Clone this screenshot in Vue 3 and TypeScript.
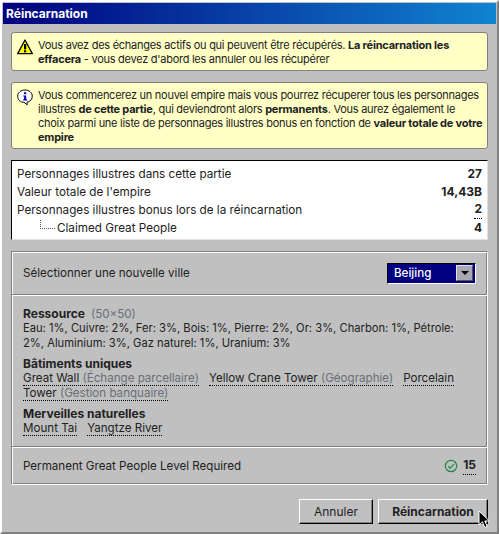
<template>
  <div class="window">
    <div class="title">Réincarnation</div>
    <div class="content">
      <div class="notice">
        <svg class="notice-icon" width="16" height="16" viewBox="0 0 16 16">
          <path d="M8 1 L15.3 14.6 H0.7 Z" fill="#ffff00" stroke="#000" stroke-width="1.3" stroke-linejoin="round" />
          <rect x="7" y="5" width="2.2" height="5.4" fill="#000" />
          <rect x="7" y="11.3" width="2.2" height="2" fill="#000" />
        </svg>
        <p>Vous avez des échanges actifs ou qui peuvent être récupérés. <b>La réincarnation les effacera</b> - vous devez d'abord les annuler ou les récupérer</p>
      </div>
      <div class="notice tall">
        <svg class="notice-icon" width="16" height="17" viewBox="0 0 16 17">
          <path d="M8 1 C12 1 15.3 3.6 15.3 7.2 C15.3 10.8 12.4 13 10 13.2 L10.2 15.8 L7 13.3 C3.4 13.2 0.7 10.8 0.7 7.2 C0.7 3.6 4 1 8 1 Z" fill="#fff" stroke="#000" stroke-width="1" />
          <rect x="7" y="3.2" width="2.2" height="2" fill="#0000c0" />
          <path d="M6.2 6.4 H9.2 V10.2 H10.2 V11.4 H6.2 V10.2 H7.1 V7.6 H6.2 Z" fill="#0000c0" />
        </svg>
        <p>Vous commencerez un nouvel empire mais vous pourrez récuperer tous les personnages illustres <b>de cette partie</b>, qui deviendront alors <b>permanents</b>. Vous aurez également le choix parmi une liste de personnages illustres bonus en fonction de <b>valeur totale de votre empire</b></p>
      </div>

      <div class="stats">
        <div v-for="row in stats" :key="row.label" class="stat-row" :class="{ child: row.child }">
          <span class="stat-label">{{ row.label }}</span>
          <b :class="{ dotted: row.dotted }">{{ row.value }}</b>
        </div>
      </div>

      <div class="panel">
        <div class="section city-row">
          <span>Sélectionner une nouvelle ville</span>
          <div class="select">
            <span class="select-value">Beijing</span>
            <span class="select-btn"><i class="arrow"></i></span>
          </div>
        </div>
        <div class="section details">
          <div class="group">
            <div class="heading"><b>Ressource</b><span class="muted size">(50×50)</span></div>
            <div>Eau: 1%, Cuivre: 2%, Fer: 3%, Bois: 1%, Pierre: 2%, Or: 3%, Charbon: 1%, Pétrole: 2%, Aluminium: 3%, Gaz naturel: 1%, Uranium: 3%</div>
          </div>
          <div class="group">
            <div class="heading"><b>Bâtiments uniques</b></div>
            <div class="links">
              <span class="link">Great Wall <span class="muted">(Échange parcellaire)</span></span>
              <span class="link">Yellow Crane Tower <span class="muted">(Géographie)</span></span>
              <span class="link">Porcelain Tower <span class="muted">(Gestion banquaire)</span></span>
            </div>
          </div>
          <div class="group">
            <div class="heading"><b>Merveilles naturelles</b></div>
            <div class="links">
              <span class="link">Mount Tai</span>
              <span class="link">Yangtze River</span>
            </div>
          </div>
        </div>
        <div class="section req-row">
          <span>Permanent Great People Level Required</span>
          <span class="req-value">
            <svg width="14" height="14" viewBox="0 0 14 14">
              <circle cx="7" cy="7" r="5.7" fill="none" stroke="#1f8a4c" stroke-width="1.2" />
              <path d="M4.2 7.2 L6.3 9.2 L10 5.2" fill="none" stroke="#1f8a4c" stroke-width="1.2" />
            </svg>
            <b class="dotted">15</b>
          </span>
        </div>
      </div>
    </div>
    <div class="footer">
      <button class="btn annuler">Annuler</button>
      <button class="btn primary">Réincarnation</button>
    </div>
    <svg class="cursor" width="13" height="19" viewBox="0 0 13 19">
      <path d="M1 1 V15 L4.4 11.8 L6.8 17.5 L9.2 16.4 L6.8 11 H11.4 Z" fill="#000" stroke="#fff" stroke-width="1" />
    </svg>
  </div>
</template>

<script setup lang="ts">
interface StatRow {
  label: string;
  value: string;
  dotted?: boolean;
  child?: boolean;
}

const stats: StatRow[] = [
  { label: 'Personnages illustres dans cette partie', value: '27' },
  { label: "Valeur totale de l'empire", value: '14,43B' },
  { label: 'Personnages illustres bonus lors de la réincarnation', value: '2', dotted: true },
  { label: 'Claimed Great People', value: '4', child: true },
];
</script>

<style>
html,
body {
  margin: 0;
  background: #c0c0c0;
}
</style>

<style scoped>
.window {
  position: relative;
  width: 499px;
  height: 534px;
  box-sizing: border-box;
  padding: 1px 1px 0;
  display: flex;
  flex-direction: column;
  background: #c0c0c0;
  border-top: 2px solid #fff;
  border-left: 2px solid #fff;
  border-right: 2px solid #808080;
  border-bottom: 2px solid #808080;
  font-family: Inter, 'Liberation Sans', sans-serif;
  font-size: 11.6px;
  line-height: 15px;
  color: #222;
}

b {
  font-size: 12px;
}

.title {
  height: 21px;
  padding-left: 3px;
  flex: none;
  display: flex;
  align-items: center;
  background: linear-gradient(to right, #000080, #1084d0);
  color: #fff;
  font-weight: 700;
  font-size: 12px;
}

.content {
  padding: 8px 8px 0;
  display: flex;
  flex-direction: column;
  gap: 11px;
}

.notice {
  display: flex;
  gap: 5px;
  height: 39px;
  box-sizing: border-box;
  padding: 5px 3px 5px 5px;
  background: #ffffc6;
  border: 1px solid #808080;
  border-radius: 3px;
  font-size: 11px;
  letter-spacing: -0.27px;
}

.notice.tall {
  height: 67px;
}

.notice b {
  font-size: 11px;
  letter-spacing: -0.22px;
}

.notice p {
  margin: 0;
  line-height: 14px;
}

.notice-icon {
  flex: none;
  margin-top: 1px;
}

.stats {
  height: 80px;
  box-sizing: border-box;
  padding: 4px 5px 2px;
  background: #fff;
  border-top: 1px solid #000;
  border-left: 1px solid #000;
  border-right: 1px solid #dfdfdf;
  border-bottom: 1px solid #dfdfdf;
  font-size: 11.7px;
  line-height: 18px;
}

.stat-row {
  display: flex;
  justify-content: space-between;
}

.stat-row.child .stat-label {
  position: relative;
  margin-left: 40px;
}

.stat-row.child .stat-label::before {
  content: '';
  position: absolute;
  left: -17px;
  top: 1px;
  width: 14px;
  height: 8px;
  border-left: 1px dotted #555;
  border-bottom: 1px dotted #555;
}

.dotted {
  border-bottom: 1px dotted #000;
  line-height: 15px;
  height: 17px;
}

.panel {
  border-top: 1px solid #808080;
  border-left: 1px solid #808080;
  border-right: 1px solid #fff;
  border-bottom: 1px solid #fff;
  box-shadow: inset 1px 1px 0 #fff, inset -1px -1px 0 #808080;
}

.section {
  padding: 0 11px;
}

.section + .section {
  border-top: 1px solid #808080;
  box-shadow: inset 0 1px 0 #fff;
}

.city-row {
  height: 42px;
  display: flex;
  align-items: center;
  justify-content: space-between;
}

.select {
  display: flex;
  align-items: center;
  width: 89px;
  height: 21px;
  box-sizing: border-box;
  padding: 1px 2px;
  background: #000080;
  border-top: 1px solid #000;
  border-left: 1px solid #000;
  border-right: 1px solid #fff;
  border-bottom: 1px solid #fff;
  color: #fff;
}

.select-value {
  flex: 1;
  padding-left: 4px;
  font-size: 11.6px;
  font-weight: 500;
}

.select-btn {
  width: 17px;
  height: 16px;
  background: #a8a8b4;
  border: 1px solid #dfdfdf;
  border-right-color: #555;
  border-bottom-color: #555;
  box-sizing: border-box;
  display: flex;
  align-items: center;
  justify-content: center;
}

.arrow {
  width: 0;
  height: 0;
  border-left: 4px solid transparent;
  border-right: 4px solid transparent;
  border-top: 4px solid #000;
}

.details {
  display: flex;
  flex-direction: column;
  gap: 5px;
  height: 152px;
  box-sizing: border-box;
  padding-top: 11px;
  font-size: 11.2px;
}

.heading {
  height: 15px;
}

.links {
  font-size: 11.6px;
}

.muted {
  color: #6a6f78;
}

.size {
  margin-left: 6px;
  font-size: 11.6px;
}

.link {
  border-bottom: 1px dotted #000;
  margin-right: 10px;
}

.req-row {
  height: 36px;
  padding-top: 1px;
  display: flex;
  align-items: center;
  justify-content: space-between;
}

.req-value {
  display: flex;
  align-items: center;
  gap: 5px;
}

.footer {
  margin-top: 14px;
  padding-right: 8px;
  display: flex;
  justify-content: flex-end;
  gap: 5px;
}

.btn {
  height: 25px;
  padding: 0;
  background: #c0c0c0;
  border-top: 1px solid #fff;
  border-left: 1px solid #fff;
  border-right: 1px solid #000;
  border-bottom: 1px solid #000;
  box-shadow: inset -1px -1px 0 #808080;
  font: inherit;
  font-size: 12px;
  color: #222;
}

.annuler {
  width: 74px;
}

.primary {
  width: 110px;
  font-weight: 700;
}

.cursor {
  position: absolute;
  left: 476px;
  top: 508px;
}
</style>
